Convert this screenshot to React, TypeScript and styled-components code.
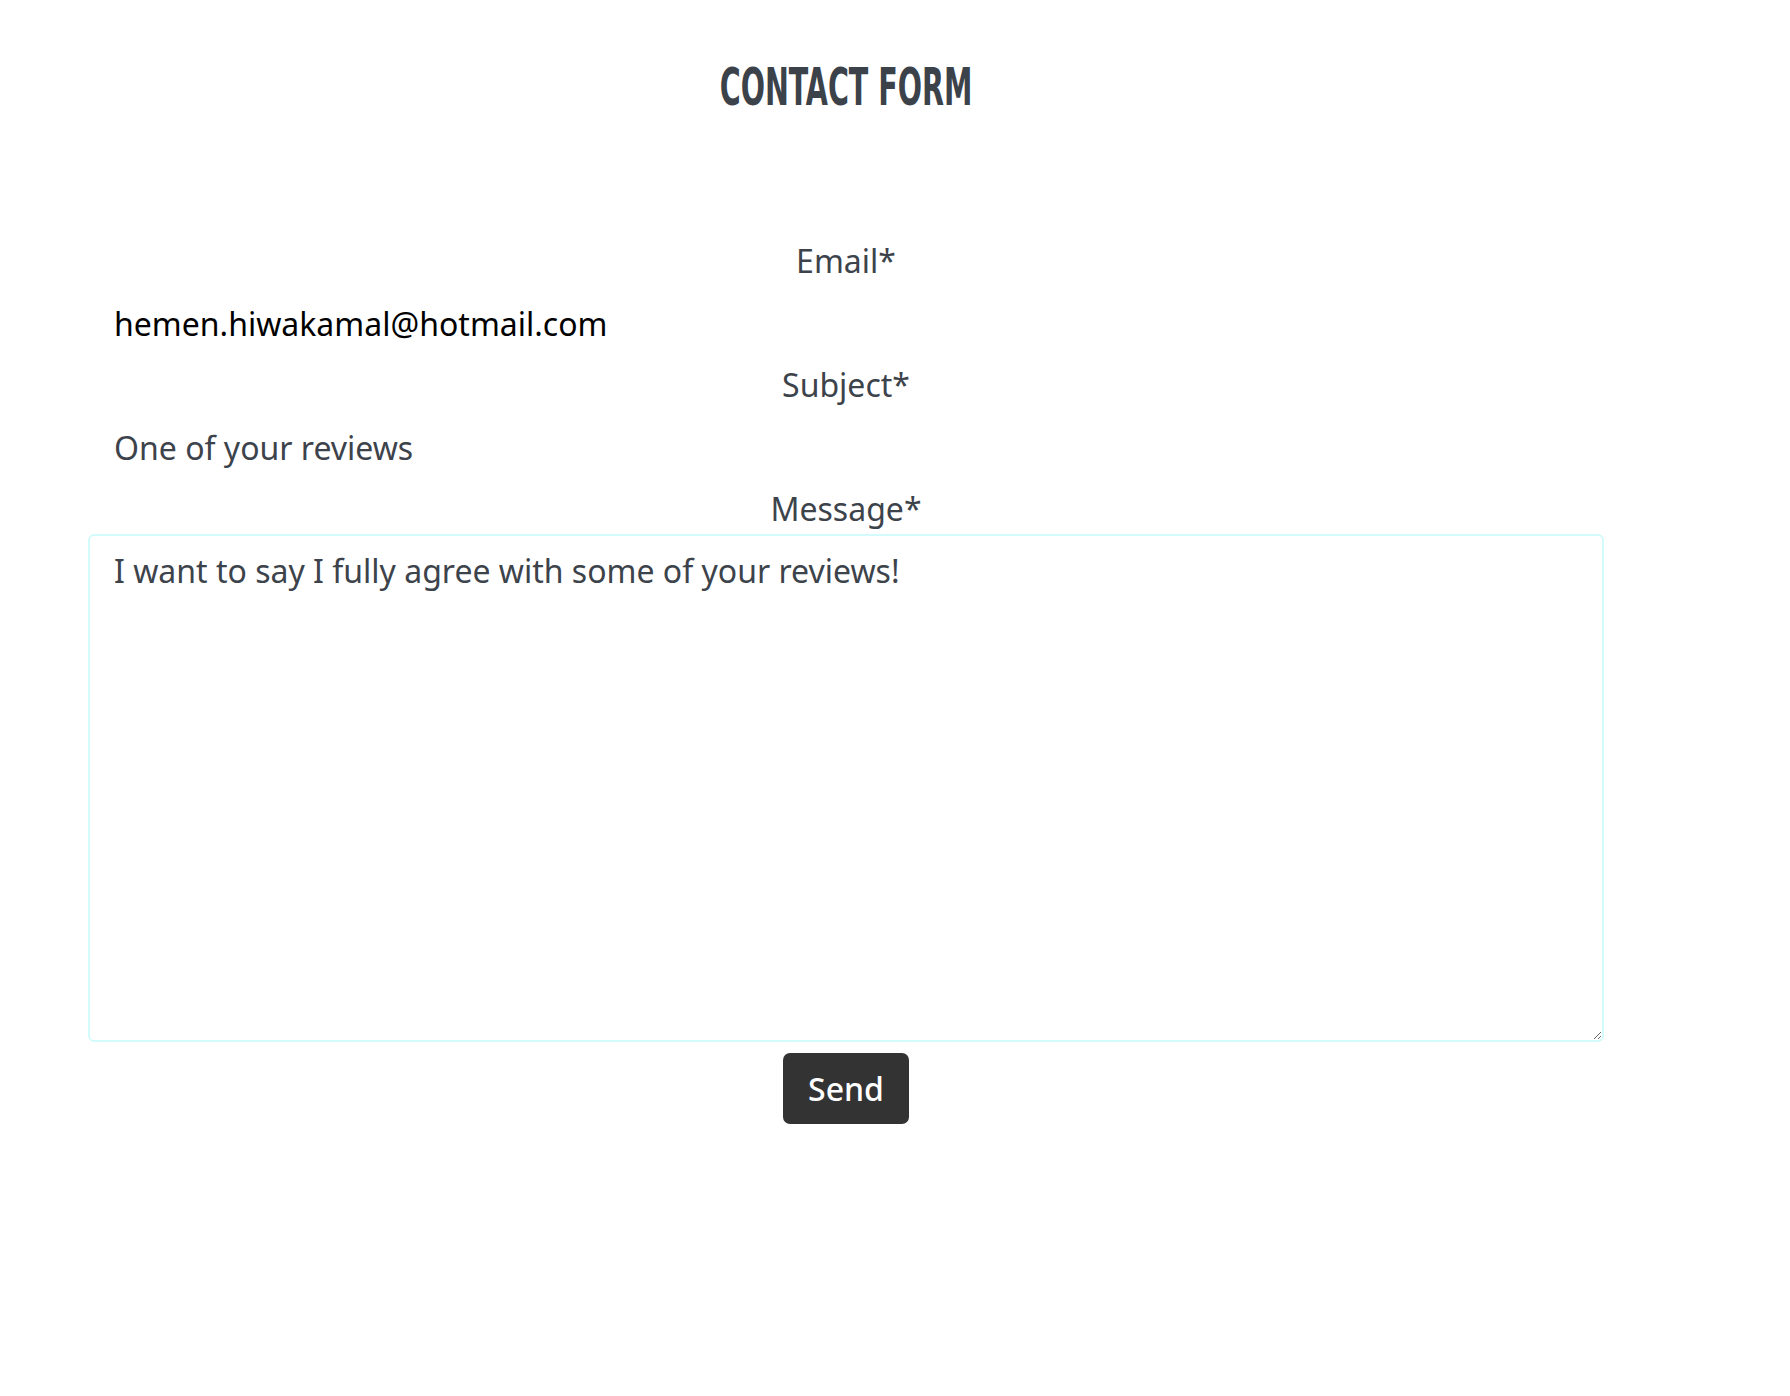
import React from "react";
import styled, { createGlobalStyle } from "styled-components";

const GlobalStyle = createGlobalStyle`
  html, body {
    margin: 0;
    padding: 0;
    background: #ffffff;
  }
  body {
    font-family: "Noto Sans", "Open Sans", sans-serif;
    color: #3d434b;
  }
  *, *::before, *::after {
    box-sizing: border-box;
  }
`;

const Page = styled.main`
  padding: 61px 0 0 88px;
  min-height: 1396px;
`;

const Container = styled.div`
  width: 1516px;
`;

const Title = styled.h1`
  margin: 0;
  text-align: center;
  font-family: "DejaVu Sans Condensed", "DejaVu Sans", sans-serif;
  font-stretch: condensed;
  font-weight: 700;
  font-size: 52px;
  line-height: 52px;
  color: #3c424a;
  text-transform: uppercase;
`;

const TitleText = styled.span`
  display: inline-block;
  transform: scaleX(0.61);
  transform-origin: center;
`;

const Form = styled.form`
  margin-top: 124px;
  display: flex;
  flex-direction: column;
`;

const Label = styled.label`
  display: block;
  text-align: center;
  font-size: 32px;
  line-height: 48px;
  color: #3d434b;
`;

const TextInput = styled.input<{ $dark?: boolean }>`
  display: block;
  width: 100%;
  border: 2px solid transparent;
  border-radius: 6px;
  padding: 12px 24px;
  font-family: "Noto Sans", "Open Sans", sans-serif;
  font-size: 32px;
  line-height: 48px;
  height: 76px;
  background: transparent;
  color: ${(p) => (p.$dark ? "#000000" : "#3d434b")};
  outline: none;
`;

const MessageArea = styled.textarea`
  display: block;
  width: 100%;
  height: 508px;
  margin-top: 1px;
  border: 2px solid #d4fbfc;
  border-radius: 6px;
  padding: 11px 24px;
  font-family: "Noto Sans", "Open Sans", sans-serif;
  font-size: 32px;
  line-height: 48px;
  color: #3d434b;
  background: #ffffff;
  outline: none;
  resize: both;
`;

const SendButton = styled.button`
  display: block;
  margin: 11px auto 0;
  height: 71px;
  padding: 0 25px;
  border: none;
  border-radius: 7px;
  background: #343333;
  color: #ffffff;
  font-family: "Noto Sans", "Open Sans", sans-serif;
  font-size: 32px;
  font-weight: 500;
  line-height: 71px;
  cursor: pointer;
`;

export default function App() {
  return (
    <>
      <GlobalStyle />
      <Page>
        <Container>
          <Title>
            <TitleText>Contact Form</TitleText>
          </Title>
          <Form onSubmit={(e) => e.preventDefault()}>
            <Label htmlFor="email">Email*</Label>
            <TextInput
              id="email"
              type="email"
              $dark
              defaultValue="hemen.hiwakamal@hotmail.com"
            />
            <Label htmlFor="subject">Subject*</Label>
            <TextInput id="subject" type="text" defaultValue="One of your reviews" />
            <Label htmlFor="message">Message*</Label>
            <MessageArea
              id="message"
              defaultValue="I want to say I fully agree with some of your reviews!"
            />
            <SendButton type="submit">Send</SendButton>
          </Form>
        </Container>
      </Page>
    </>
  );
}
